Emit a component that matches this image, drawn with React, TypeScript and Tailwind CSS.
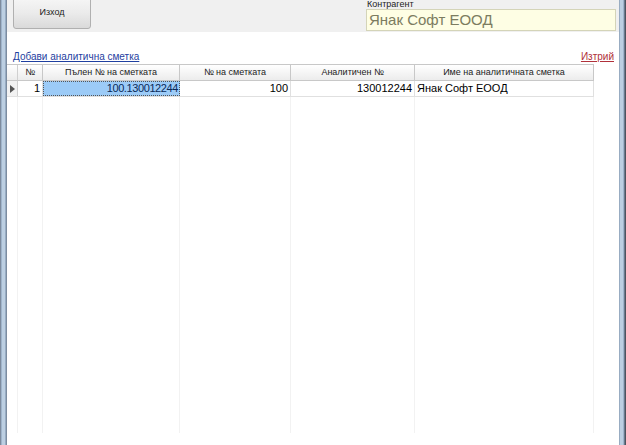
import React from "react";

const cols = [
  { w: 25, title: "№" },
  { w: 137, title: "Пълен № на сметката" },
  { w: 111, title: "№ на сметката" },
  { w: 124, title: "Аналитичен №" },
  { w: 179, title: "Име на аналитичната сметка" },
];

export default function App() {
  return (
    <div
      className="flex h-[445px] w-[626px] overflow-hidden bg-white text-black"
      style={{ fontFamily: '"Liberation Sans", "DejaVu Sans", sans-serif' }}
    >
      {/* left window border */}
      <div className="flex h-full w-[7px] shrink-0">
        <div className="w-[1px] bg-[#7d8b9d]" />
        <div className="w-[1px] bg-[#9fb4cb]" />
        <div className="w-[3px] bg-[#bccfe2]" />
        <div className="w-[1px] bg-[#98acc2]" />
        <div className="w-[1px] bg-[#7c8ca0]" />
      </div>

      <div className="flex min-w-0 flex-1 flex-col">
        {/* top panel */}
        <div className="relative h-[32px] shrink-0 bg-[#f0f0f0]">
          <button className="absolute left-[6px] top-[-3px] flex h-[32px] w-[78px] items-center justify-center rounded-[3px] border border-[#b0b0b0] bg-gradient-to-b from-[#f6f6f6] via-[#ebebeb] to-[#dadada] text-[9px] text-[#222]">
            Изход
          </button>
          <div className="absolute left-[360px] top-0 text-[9px] leading-[9px] text-[#222]">
            Контрагент
          </div>
          <div className="absolute left-[359px] top-[9px] flex h-[22px] w-[250px] items-center border border-[#d4d4b8] bg-[#fefee4] pl-[2px] text-[15px] text-[#7c7c60]">
            Янак Софт ЕООД
          </div>
        </div>

        {/* link row */}
        <div className="flex h-[32px] shrink-0 items-end justify-between pb-[2px] pl-[6px] pr-[5px] text-[10px] leading-[11px]">
          <span className="text-[#1f3f9f] underline">Добави аналитична сметка</span>
          <span className="text-[#b0303a] underline">Изтрий</span>
        </div>

        {/* grid */}
        <div className="flex w-[587px] flex-1 flex-col pb-[12px]">
          {/* header */}
          <div className="flex h-[17px] shrink-0 border-y border-[#c8c8c8] bg-gradient-to-b from-white to-[#ececec] text-[9px] text-[#222]">
            <div className="w-[11px] shrink-0 border-r border-[#d0d0d0]" />
            {cols.map((c) => (
              <div
                key={c.title}
                className="flex shrink-0 items-center justify-center border-r border-[#c8c8c8]"
                style={{ width: c.w }}
              >
                {c.title}
              </div>
            ))}
          </div>
          {/* row 1 */}
          <div className="flex h-[16px] shrink-0 border-b border-[#e0e0e0] text-[11px]">
            <div className="flex w-[11px] shrink-0 items-center justify-center border-r border-[#d0d0d0] bg-[#f2f2f2]">
              <svg width="5" height="8" viewBox="0 0 5 8">
                <path d="M0 0 L5 4 L0 8 Z" fill="#555" />
              </svg>
            </div>
            <div className="flex w-[25px] shrink-0 items-center justify-end border-r border-[#e0e0e0] pr-[2px]">1</div>
            <div className="flex w-[137px] shrink-0 items-center justify-end border border-dotted border-[#555] bg-[#9ccbf7] pr-[1px] tracking-[-0.4px] text-[#0a2a5a]">
              100.130012244
            </div>
            <div className="flex w-[111px] shrink-0 items-center justify-end border-r border-[#e0e0e0] pr-[2px]">100</div>
            <div className="flex w-[124px] shrink-0 items-center justify-end border-r border-[#e0e0e0] pr-[2px]">130012244</div>
            <div className="flex w-[179px] shrink-0 items-center border-r border-[#e0e0e0] pl-[2px]">Янак Софт ЕООД</div>
          </div>
          {/* empty area with faint column lines */}
          <div className="flex flex-1">
            <div className="w-[11px] shrink-0 border-r border-[#f2f2f2]" />
            {cols.map((c) => (
              <div
                key={c.title}
                className="shrink-0 border-r border-[#f2f2f2]"
                style={{ width: c.w }}
              />
            ))}
          </div>
        </div>
      </div>

      {/* right window border */}
      <div className="flex h-full w-[7px] shrink-0">
        <div className="w-[1px] bg-[#98acc2]" />
        <div className="w-[3px] bg-[#bccfe2]" />
        <div className="w-[1px] bg-[#9fb4cb]" />
        <div className="w-[1px] bg-[#6a7a8c]" />
        <div className="w-[1px] bg-[#4c5460]" />
      </div>
    </div>
  );
}
